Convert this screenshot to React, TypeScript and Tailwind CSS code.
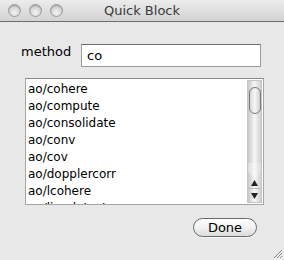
import React from "react";

const items = [
  "ao/cohere",
  "ao/compute",
  "ao/consolidate",
  "ao/conv",
  "ao/cov",
  "ao/dopplercorr",
  "ao/lcohere",
  "ao/linedetect",
];

function Light() {
  return (
    <div className="w-[13px] h-[13px] rounded-full border border-[#9a9a9a] bg-[radial-gradient(circle_at_50%_70%,#f4f4f4_0%,#d6d6d6_55%,#bdbdbd_100%)] shadow-[inset_0_1px_1px_rgba(0,0,0,0.2)]" />
  );
}

export default function App() {
  const font = { fontFamily: '"DejaVu Sans", "Noto Sans", sans-serif' };
  return (
    <div className="w-[284px] h-[260px] bg-[#e8e8e8] relative overflow-hidden" style={font}>
      <div className="h-[22px] bg-gradient-to-b from-[#ececec] to-[#d3d3d3] border-b border-[#6e6e6e] relative flex items-center pl-[8px] gap-[8px]">
        <Light />
        <Light />
        <Light />
        <div className="absolute inset-0 flex items-center justify-center text-[13px] text-[#3a3a3a] pt-[1px]">
          Quick Block
        </div>
      </div>
      <div className="flex items-start mt-[22px] pl-[21px]">
        <div className="text-[13px] text-black leading-[15px] w-[60px]">method</div>
        <div className="w-[180px] h-[23px] bg-white border border-[#9c9c9c] border-t-[#6f6f6f] flex items-center pl-[5px] pt-[1px] text-[13px] text-black">
          co
        </div>
      </div>
      <div className="ml-[25px] mt-[11px] w-[239px] h-[127px] bg-white border border-[#a6a6a6] border-t-[#8a8a8a] flex">
        <div className="flex-1 overflow-hidden pt-[2px] pl-[2px]">
          {items.map((t) => (
            <div key={t} className="h-[17px] leading-[17px] text-[12px] text-black whitespace-nowrap">
              {t}
            </div>
          ))}
        </div>
        <div className="w-[15px] mt-[1px] mb-[1px] mr-[1px] flex flex-col bg-gradient-to-r from-[#c8c8c8] via-[#f6f6f6] to-[#d0d0d0] border border-[#c4c4c4]">
          <div className="pt-[6px] flex justify-center">
            <div className="w-[12px] h-[27px] rounded-full border-[1.5px] border-[#777] bg-gradient-to-r from-[#d9d9d9] via-[#f7f7f7] to-[#cfcfcf]" />
          </div>
          <div className="flex-1" />
          <div className="h-[13px] rounded-b-full bg-gradient-to-r from-[#dcdcdc] via-[#f8f8f8] to-[#dcdcdc] -mt-[6px] mb-[1px]" />
          <div className="h-[11px] flex items-center justify-center">
            <svg width="7" height="6" viewBox="0 0 7 6"><path d="M3.5 0 L7 6 L0 6 Z" fill="#222" /></svg>
          </div>
          <div className="h-[1px] bg-[#bdbdbd]" />
          <div className="h-[13px] flex items-center justify-center">
            <svg width="7" height="6" viewBox="0 0 7 6"><path d="M0 0 L7 0 L3.5 6 Z" fill="#222" /></svg>
          </div>
        </div>
      </div>
      <div className="flex justify-end pr-[27px] mt-[13px]">
        <div className="w-[64px] h-[19px] rounded-full border border-[#6a6a6a] bg-gradient-to-b from-[#ffffff] via-[#f2f2f2] to-[#dcdcdc] flex items-center justify-center text-[13px] text-black shadow-[0_1px_0_rgba(255,255,255,0.6)]">
          Done
        </div>
      </div>
      <svg className="absolute right-[1px] bottom-[1px]" width="11" height="11" viewBox="0 0 11 11">
        <path d="M10 2 L2 10 M10 5 L5 10 M10 8 L8 10" stroke="#8a8a8a" strokeWidth="1" />
        <path d="M11 3 L3 11 M11 6 L6 11 M11 9 L9 11" stroke="#fafafa" strokeWidth="1" />
      </svg>
    </div>
  );
}
